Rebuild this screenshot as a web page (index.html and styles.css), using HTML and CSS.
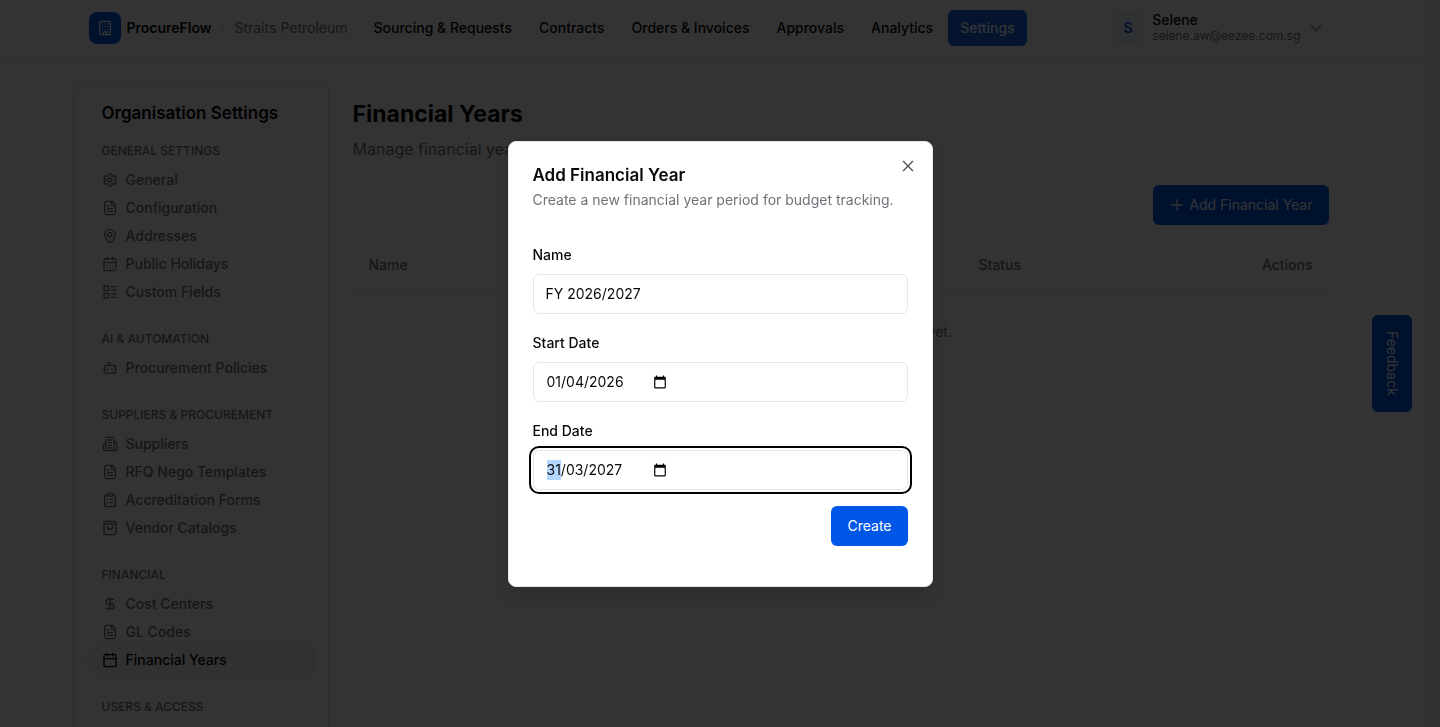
FILE: index.html
```html
<!DOCTYPE html>
<html lang="en-GB">
<head>
<meta charset="utf-8">
<meta name="viewport" content="width=device-width, initial-scale=1">
<title>Financial Years - ProcureFlow</title>
<link rel="stylesheet" href="styles.css">
</head>
<body>
<svg class="sprite" aria-hidden="true">
  <symbol id="building" viewBox="0 0 24 24"><rect x="4" y="2" width="16" height="20" rx="2"/><path d="M9 22v-4h6v4M8 6h.01M16 6h.01M12 6h.01M12 10h.01M12 14h.01M16 10h.01M16 14h.01M8 10h.01M8 14h.01"/></symbol>
  <symbol id="gear" viewBox="0 0 24 24"><path d="M12.22 2h-.44a2 2 0 0 0-2 2v.18a2 2 0 0 1-1 1.73l-.43.25a2 2 0 0 1-2 0l-.15-.08a2 2 0 0 0-2.73.73l-.22.38a2 2 0 0 0 .73 2.73l.15.1a2 2 0 0 1 1 1.72v.51a2 2 0 0 1-1 1.74l-.15.09a2 2 0 0 0-.73 2.73l.22.38a2 2 0 0 0 2.73.73l.15-.08a2 2 0 0 1 2 0l.43.25a2 2 0 0 1 1 1.73V20a2 2 0 0 0 2 2h.44a2 2 0 0 0 2-2v-.18a2 2 0 0 1 1-1.73l.43-.25a2 2 0 0 1 2 0l.15.08a2 2 0 0 0 2.73-.73l.22-.39a2 2 0 0 0-.73-2.73l-.15-.08a2 2 0 0 1-1-1.74v-.5a2 2 0 0 1 1-1.74l.15-.09a2 2 0 0 0 .73-2.73l-.22-.38a2 2 0 0 0-2.73-.73l-.15.08a2 2 0 0 1-2 0l-.43-.25a2 2 0 0 1-1-1.73V4a2 2 0 0 0-2-2z"/><circle cx="12" cy="12" r="3"/></symbol>
  <symbol id="file" viewBox="0 0 24 24"><path d="M15 2H6a2 2 0 0 0-2 2v16a2 2 0 0 0 2 2h12a2 2 0 0 0 2-2V7Z"/><path d="M14 2v4a2 2 0 0 0 2 2h4M10 9H8M16 13H8M16 17H8"/></symbol>
  <symbol id="pin" viewBox="0 0 24 24"><path d="M20 10c0 4.993-5.539 10.193-7.399 11.799a1 1 0 0 1-1.202 0C9.539 20.193 4 14.993 4 10a8 8 0 0 1 16 0"/><circle cx="12" cy="10" r="3"/></symbol>
  <symbol id="calendar-days" viewBox="0 0 24 24"><path d="M8 2v4M16 2v4M3 10h18M8 14h.01M12 14h.01M16 14h.01M8 18h.01M12 18h.01M16 18h.01"/><rect x="3" y="4" width="18" height="18" rx="2"/></symbol>
  <symbol id="layout-list" viewBox="0 0 24 24"><rect x="3" y="3" width="7" height="7" rx="1"/><rect x="3" y="14" width="7" height="7" rx="1"/><path d="M14 4h7M14 9h7M14 15h7M14 20h7"/></symbol>
  <symbol id="bot" viewBox="0 0 24 24"><path d="M12 8V4H8"/><rect x="4" y="8" width="16" height="12" rx="2"/><path d="M2 14h2M20 14h2M15 13v2M9 13v2"/></symbol>
  <symbol id="buildings" viewBox="0 0 24 24"><path d="M6 22V4a2 2 0 0 1 2-2h8a2 2 0 0 1 2 2v18ZM6 12H4a2 2 0 0 0-2 2v6a2 2 0 0 0 2 2h2M18 9h2a2 2 0 0 1 2 2v9a2 2 0 0 1-2 2h-2M10 6h4M10 10h4M10 14h4M10 18h4"/></symbol>
  <symbol id="clipboard" viewBox="0 0 24 24"><rect x="8" y="2" width="8" height="4" rx="1"/><path d="M16 4h2a2 2 0 0 1 2 2v14a2 2 0 0 1-2 2H6a2 2 0 0 1-2-2V6a2 2 0 0 1 2-2h2M12 11h4M12 16h4M8 11h.01M8 16h.01"/></symbol>
  <symbol id="bag" viewBox="0 0 24 24"><rect x="3" y="2" width="18" height="20" rx="2.5"/><path d="M3 6h18M16 10a4 4 0 0 1-8 0"/></symbol>
  <symbol id="dollar" viewBox="0 0 24 24"><path d="M12 2v20M17 5H9.500a3.500 3.500 0 0 0 0 7h5a3.500 3.500 0 0 1 0 7H6"/></symbol>
  <symbol id="calendar" viewBox="0 0 24 24"><path d="M8 2v4M16 2v4M3 10h18"/><rect x="3" y="4" width="18" height="18" rx="2"/></symbol>
  <symbol id="chevron" viewBox="0 0 24 24"><path d="m4 8 8 8 8-8"/></symbol>
  <symbol id="plus" viewBox="0 0 24 24"><path d="M4 12h16M12 4v16"/></symbol>
  <symbol id="close" viewBox="0 0 24 24"><path d="M19 5 5 19M5 5l14 14"/></symbol>
  <symbol id="picker" viewBox="0 0 24 24"><path d="M20 3h-1V1h-2v2H7V1H5v2H4c-1.100 0-2 .9-2 2v16c0 1.100.9 2 2 2h16c1.100 0 2-.9 2-2V5c0-1.100-.9-2-2-2zm0 18H4V8h16v13z"/></symbol>
</svg>

<div class="app">
  <div class="page">
    <header class="topbar">
      <div class="container topbar-inner">
        <span class="logo"><svg class="icon"><use href="#building"/></svg></span>
        <strong class="brand">ProcureFlow</strong>
        <span class="company">Straits Petroleum</span>
        <nav class="nav" aria-label="Main">
          <a href="#">Sourcing &amp; Requests</a>
          <a href="#">Contracts</a>
          <a href="#">Orders &amp; Invoices</a>
          <a href="#">Approvals</a>
          <a href="#">Analytics</a>
          <a href="#" class="current">Settings</a>
        </nav>
        <button type="button" class="account">
          <span class="avatar">S</span>
          <span class="account-text"><span class="account-name">Selene</span><span class="account-email">selene.aw@eezee.com.sg</span></span>
          <svg class="icon icon-small"><use href="#chevron"/></svg>
        </button>
      </div>
    </header>

    <div class="container layout">
      <aside class="sidebar">
        <h2 class="sidebar-title">Organisation Settings</h2>
        <section class="group">
          <h3>General Settings</h3>
          <a href="#"><svg class="icon"><use href="#gear"/></svg>General</a>
          <a href="#"><svg class="icon"><use href="#file"/></svg>Configuration</a>
          <a href="#"><svg class="icon"><use href="#pin"/></svg>Addresses</a>
          <a href="#"><svg class="icon"><use href="#calendar-days"/></svg>Public Holidays</a>
          <a href="#"><svg class="icon"><use href="#layout-list"/></svg>Custom Fields</a>
        </section>
        <section class="group">
          <h3>AI &amp; Automation</h3>
          <a href="#"><svg class="icon"><use href="#bot"/></svg>Procurement Policies</a>
        </section>
        <section class="group">
          <h3>Suppliers &amp; Procurement</h3>
          <a href="#"><svg class="icon"><use href="#buildings"/></svg>Suppliers</a>
          <a href="#"><svg class="icon"><use href="#file"/></svg>RFQ Nego Templates</a>
          <a href="#"><svg class="icon"><use href="#clipboard"/></svg>Accreditation Forms</a>
          <a href="#"><svg class="icon"><use href="#bag"/></svg>Vendor Catalogs</a>
        </section>
        <section class="group">
          <h3>Financial</h3>
          <a href="#"><svg class="icon"><use href="#dollar"/></svg>Cost Centers</a>
          <a href="#"><svg class="icon"><use href="#file"/></svg>GL Codes</a>
          <a href="#" class="current"><svg class="icon"><use href="#calendar"/></svg>Financial Years</a>
        </section>
        <section class="group">
          <h3>Users &amp; Access</h3>
        </section>
      </aside>

      <main class="main">
        <h1>Financial Years</h1>
        <p class="lead">Manage financial years for budget tracking.</p>
        <div class="actions">
          <button type="button" class="button"><svg class="icon"><use href="#plus"/></svg>Add Financial Year</button>
        </div>
        <table class="years">
          <thead>
            <tr><th class="col-name">Name</th><th>Status</th><th class="col-actions">Actions</th></tr>
          </thead>
          <tbody>
            <tr><td colspan="3">No financial years configured yet.</td></tr>
          </tbody>
        </table>
      </main>
    </div>
  </div>
  <div class="scroll-track"></div>
</div>

<button type="button" class="feedback">Feedback</button>

<div class="overlay">
  <div class="dialog" role="dialog" aria-modal="true" aria-labelledby="dialog-title">
    <h2 id="dialog-title">Add Financial Year</h2>
    <p class="dialog-text">Create a new financial year period for budget tracking.</p>
    <form class="form">
      <div class="fields">
        <div class="field">
          <label for="name">Name</label>
          <input class="input" id="name" type="text" value="FY 2026/2027">
        </div>
        <div class="field">
          <label for="start">Start Date</label>
          <div class="input date">
            <input id="start" type="text" inputmode="numeric" value="01/04/2026">
            <button type="button" class="picker" aria-label="Choose start date"><svg><use href="#picker"/></svg></button>
          </div>
        </div>
        <div class="field">
          <label for="end">End Date</label>
          <div class="input date active">
            <input id="end" type="text" inputmode="numeric" value="31/03/2027">
            <button type="button" class="picker" aria-label="Choose end date"><svg><use href="#picker"/></svg></button>
          </div>
        </div>
      </div>
      <button type="submit" class="button submit">Create</button>
    </form>
    <button type="button" class="close" aria-label="Close"><svg class="icon"><use href="#close"/></svg></button>
  </div>
</div>
<script src="script.js"></script>
</body>
</html>
```
FILE: styles.css
```css
:root {
  --blue: #0057e7;
  --ink: #09090b;
  --muted: #71717a;
  --line: #e7e7ea;
}

* { box-sizing: border-box; }

body {
  margin: 0;
  color: var(--ink);
  font: 14px/20px Inter, "Liberation Sans", sans-serif;
}

h1, h2, h3, p { margin: 0; }
a { color: inherit; text-decoration: none; }
button, input { font: inherit; color: inherit; }
button { border: 0; cursor: pointer; }

.sprite { display: none; }

.icon {
  width: 16px;
  height: 16px;
  flex: none;
  fill: none;
  stroke: currentColor;
  stroke-width: 2;
  stroke-linecap: round;
  stroke-linejoin: round;
}

.icon-small { width: 14px; height: 14px; }

.app {
  display: grid;
  grid-template-columns: minmax(0, 1fr) 15px;
  height: 100vh;
  overflow: hidden;
}

.scroll-track { background: #fafafa; border-left: 1px solid #eee; }

.container {
  width: 100%;
  max-width: 1280px;
  margin: 0 auto;
}

/* Top bar */

.topbar { border-bottom: 1px solid var(--line); }

.topbar-inner {
  display: flex;
  align-items: center;
  height: 56px;
  padding: 0 16px;
}

.logo {
  display: grid;
  place-items: center;
  width: 32px;
  height: 32px;
  border-radius: 8px;
  background: var(--blue);
  color: #fff;
}

.brand { margin-left: 6px; font-weight: 600; }

.company {
  margin: 0 14px 0 10px;
  padding-left: 12px;
  border-left: 1px solid var(--line);
  color: var(--muted);
}

.nav {
  display: flex;
  gap: 3px;
  font-weight: 500;
}

.nav a { padding: 8px 12px; border-radius: 6px; }
.nav .current { background: #1464e8; color: #fff; }

.account {
  display: flex;
  align-items: center;
  gap: 8px;
  margin-left: auto;
  padding: 0 14px;
  background: none;
  text-align: left;
}

.avatar {
  display: grid;
  place-items: center;
  width: 32px;
  height: 32px;
  border-radius: 8px;
  background: #f0f5fe;
  color: var(--blue);
  font-weight: 600;
}

.account-text { display: flex; flex-direction: column; }
.account-name { font-weight: 500; line-height: 16px; }
.account-email { color: var(--muted); font-size: 12px; line-height: 16px; }
.account .icon { color: var(--muted); }

/* Settings layout */

.layout {
  display: flex;
  gap: 24px;
  padding: 24px 24px 24px 0;
}

.sidebar {
  flex: none;
  width: 256px;
  padding: 17px 12px;
  border: 1px solid var(--line);
  border-radius: 8px;
}

.sidebar-title {
  padding: 0 16px;
  font-size: 17px;
  font-weight: 600;
  line-height: 28px;
}

.group { margin-top: 25px; color: var(--muted); }
.sidebar-title + .group { margin-top: 16px; }

.group h3 {
  margin-bottom: 7px;
  padding: 0 16px;
  font-size: 12px;
  font-weight: 500;
  line-height: 16px;
  text-transform: uppercase;
}

.group a {
  display: flex;
  align-items: center;
  gap: 8px;
  padding: 4px 16px;
  border-radius: 6px;
  font-weight: 500;
}

.group .current { background: #f4f4f5; color: var(--ink); }

.main { flex: 1; padding-top: 17px; }

.main h1 { font-size: 23px; line-height: 32px; }
.lead { margin-top: 7px; color: var(--muted); font-size: 16px; line-height: 24px; }

.actions {
  display: flex;
  justify-content: flex-end;
  margin: 24px 0 16px;
}

.button {
  display: inline-flex;
  align-items: center;
  gap: 4px;
  height: 40px;
  padding: 0 16px;
  border-radius: 6px;
  background: var(--blue);
  color: #fff;
}

.years { width: 100%; border-collapse: collapse; color: var(--muted); }

.years th {
  height: 48px;
  padding: 0 16px;
  border-bottom: 1px solid var(--line);
  font-weight: 500;
  text-align: left;
}

.years .col-name { width: 62.500%; }
.years .col-actions { text-align: right; }
.years td { padding: 32px 16px; text-align: center; }

.feedback {
  position: fixed;
  top: 315px;
  right: 28px;
  width: 40px;
  padding: 16px 0;
  border-radius: 6px;
  background: var(--blue);
  color: #fff;
  writing-mode: vertical-rl;
}

/* Dialog */

.overlay {
  position: fixed;
  inset: 0;
  display: grid;
  place-items: center;
  background: rgb(0 0 0 / 80%);
}

.dialog {
  position: relative;
  width: 100%;
  max-width: 425px;
  padding: 24px 24px 40px;
  border: 1px solid var(--line);
  border-radius: 8px;
  background: #fff;
  box-shadow: 0 10px 15px rgb(0 0 0 / 10%);
}

.dialog h2 { font-size: 17px; font-weight: 600; line-height: 18px; }
.dialog-text { margin-top: 6px; color: var(--muted); }

.close {
  position: absolute;
  top: 16px;
  right: 16px;
  display: flex;
  padding: 0;
  background: none;
  opacity: .7;
}

.form {
  display: flex;
  flex-direction: column;
  gap: 16px;
  margin-top: 34px;
}

.fields { display: flex; flex-direction: column; gap: 18px; }
.field { display: flex; flex-direction: column; gap: 8px; }
.field label { font-weight: 500; line-height: 22px; }

.input {
  width: 100%;
  height: 40px;
  padding: 0 12px;
  border: 1px solid var(--line);
  border-radius: 6px;
  background: #fff;
}

.date {
  display: flex;
  align-items: center;
}

.date.active { outline: 2px solid #000; outline-offset: 2px; }

.date input {
  width: 107px;
  padding: 0 0 0 1px;
  border: 0;
  outline: 0;
  background: none;
}

.date input::selection { background: #b3d7ff; color: var(--ink); }

.picker { display: flex; padding: 0; background: none; }
.picker svg { width: 14px; height: 14px; fill: #000; }

.submit { align-self: flex-end; }
```
FILE: script.js
```js
const endDate = document.getElementById("end");
endDate.focus();
endDate.setSelectionRange(0, 2);
```
